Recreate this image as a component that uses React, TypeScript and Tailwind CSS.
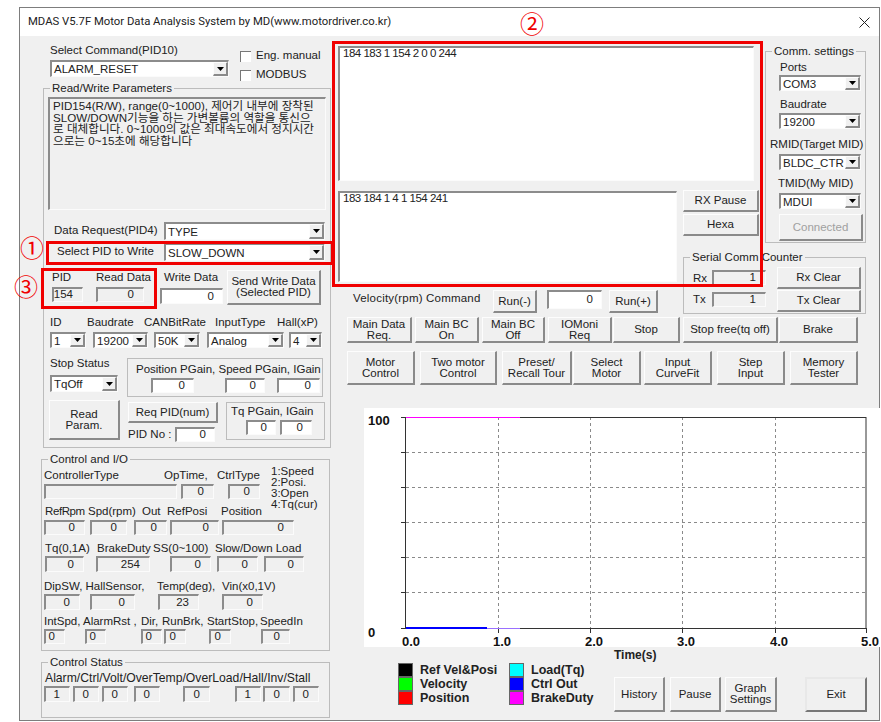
import type { ReactNode } from "react";
import { twMerge } from "tailwind-merge";

const sunken =
  "border-t-2 border-l-2 border-r border-b border-t-[#8c8c8c] border-l-[#8c8c8c] border-r-[#fbfbfb] border-b-[#fbfbfb]";
const raised =
  "border-t border-l border-r-2 border-b-2 border-t-[#fdfdfd] border-l-[#fdfdfd] border-r-[#8a8a8a] border-b-[#8a8a8a] bg-[#f0f0f0]";

type BoxProps = { className?: string; v?: string };

function Field({ className, v }: BoxProps) {
  return (
    <div className={twMerge("flex h-[15px] shrink-0 items-center justify-end pr-[9px] leading-none bg-[#f0f0f0]", sunken, className)}>
      {v}
    </div>
  );
}

function Input({ className, v }: BoxProps) {
  return (
    <div className={twMerge("flex h-[15px] shrink-0 items-center justify-end pr-[8px] leading-none bg-white", sunken, className)}>
      {v}
    </div>
  );
}

function Combo({ className, v }: BoxProps) {
  return (
    <div className={twMerge("flex h-[17px] shrink-0 items-center bg-white", sunken, className)}>
      <span className="min-w-0 flex-1 overflow-hidden whitespace-nowrap pl-[2px] leading-[14px]">{v}</span>
      <span className={twMerge("flex w-[15px] shrink-0 items-center justify-center self-stretch", raised)}>
        <svg width="7" height="4" viewBox="0 0 7 4">
          <path d="M0 0h7L3.5 4z" fill="#000" />
        </svg>
      </span>
    </div>
  );
}

function Btn({ className, children }: { className?: string; children: ReactNode }) {
  return (
    <div className={twMerge("flex shrink-0 items-center justify-center text-center leading-[11px]", raised, className)}>
      <span>{children}</span>
    </div>
  );
}

function Group({ title, className, children }: { title?: string; className?: string; children: ReactNode }) {
  return (
    <div className={twMerge("relative shrink-0 border border-[#bcbcbc]", className)}>
      {title && (
        <span className="absolute left-[6px] top-[-8px] whitespace-nowrap bg-[#f0f0f0] px-[2px] leading-[14px]">{title}</span>
      )}
      {children}
    </div>
  );
}

function Check({ label, className }: { label: string; className?: string }) {
  return (
    <div className={twMerge("flex items-center", className)}>
      <span className="h-[11px] w-[11px] border-t border-l border-[#777] bg-white" />
      <span className="ml-[5px] pb-[2px] leading-none">{label}</span>
    </div>
  );
}

function Row({ className, children }: { className?: string; children: ReactNode }) {
  return <div className={twMerge("flex whitespace-nowrap", className)}>{children}</div>;
}

function LeftPanel() {
  return (
    <div className="flex w-[312px] shrink-0 flex-col">
      <div className="ml-[30px] mt-[7px] flex h-[37px]">
        <div className="w-[179px]">
          <div className="h-[17px] leading-[15px]">Select Command(PID10)</div>
          <Combo className="w-[179px]" v="ALARM_RESET" />
        </div>
        <div className="ml-[11px] pt-[7px]">
          <Check label="Eng. manual" />
          <Check label="MODBUS" className="mt-[5px]" />
        </div>
      </div>

      <Group title="Read/Write Parameters" className="ml-[23px] mt-[8px] h-[360px] w-[288px]">
        <div className={twMerge("ml-[4px] mt-[8px] h-[113px] w-[278px] whitespace-nowrap bg-[#f0f0f0] pl-[3px] pt-[1px] text-[11.6px] leading-[11.5px]", sunken)}>
          PID154(R/W), range(0~1000), 제어기 내부에 장착된
          <br />
          SLOW/DOWN기능을 하는 가변볼륨의 역할을 통신으
          <br />
          로 대체합니다. 0~1000의 값은 최대속도에서 정지시간
          <br />
          으로는 0~15초에 해당합니다
        </div>
        <Row className="mt-[12px] items-center">
          <span className="ml-[10px] w-[110px]">Data Request(PID4)</span>
          <Combo className="h-[18px] w-[161px]" v="TYPE" />
        </Row>
        <Row className="mt-[3px] items-center">
          <span className="ml-[13px] w-[107px]">Select PID to Write</span>
          <Combo className="h-[18px] w-[161px]" v="SLOW_DOWN" />
        </Row>
        <Row className="mt-[9px]">
          <div className="ml-[8px] w-[44px]">
            <div className="h-[17px] leading-[14px]">PID</div>
            <Field className="w-[31px]" v="154" />
          </div>
          <div className="w-[64px]">
            <div className="h-[17px] leading-[14px]">Read Data</div>
            <Field className="w-[48px]" v="0" />
          </div>
          <div className="w-[67px]">
            <div className="h-[18px] pl-[4px] leading-[14px]">Write Data</div>
            <Input className="h-[16px] w-[63px]" v="0" />
          </div>
          <Btn className="h-[35px] w-[94px]">
            Send Write Data
            <br />
            (Selected PID)
          </Btn>
        </Row>
        <Row className="ml-[6px] mt-[11px] h-[13px] items-center">
          <span className="w-[37px]">ID</span>
          <span className="w-[57px]">Baudrate</span>
          <span className="w-[71px]">CANBitRate</span>
          <span className="w-[62px]">InputType</span>
          <span>Hall(xP)</span>
        </Row>
        <Row className="ml-[6px] mt-[3px]">
          <Combo className="h-[16px] w-[36px]" v="1" />
          <Combo className="ml-[7px] h-[16px] w-[55px]" v="19200" />
          <Combo className="ml-[6px] h-[16px] w-[46px]" v="50K" />
          <Combo className="ml-[7px] h-[16px] w-[77px]" v="Analog" />
          <Combo className="ml-[5px] h-[16px] w-[33px]" v="4" />
        </Row>
        <Row className="mt-[9px]">
          <div className="ml-[6px] w-[77px]">
            <div className="h-[18px] leading-[13px]">Stop Status</div>
            <Combo className="w-[68px]" v="TqOff" />
          </div>
          <Group className="mt-[1px] h-[39px] w-[196px]">
            <div className="h-[19px] pl-[8px] pt-[3px] leading-[14px]">Position PGain, Speed PGain, IGain</div>
            <Row>
              <Input className="ml-[23px] w-[43px]" v="0" />
              <Input className="ml-[31px] w-[40px]" v="0" />
              <Input className="ml-[12px] w-[43px]" v="0" />
            </Row>
          </Group>
        </Row>
        <Row className="mt-[3px]">
          <Btn className="ml-[5px] h-[40px] w-[71px]">
            Read
            <br />
            Param.
          </Btn>
          <div className="ml-[8px] w-[98px]">
            <Btn className="mt-[2px] h-[21px] w-[90px]">Req PID(num)</Btn>
            <Row className="mt-[3px] items-center">
              <span className="w-[47px]">PID No :</span>
              <Input className="w-[40px]" v="0" />
            </Row>
          </div>
          <Group className="mt-[2px] h-[38px] w-[99px]">
            <div className="h-[17px] pl-[4px] pt-[1px] leading-[14px]">Tq PGain, IGain</div>
            <Row>
              <Input className="ml-[19px] w-[30px]" v="0" />
              <Input className="ml-[4px] w-[32px]" v="0" />
            </Row>
          </Group>
        </Row>
      </Group>

      <Group title="Control and I/O" className="ml-[21px] mt-[11px] h-[192px] w-[289px]">
        <div className="mt-[9px] flex">
          <div className="w-[229px] pl-[2px]">
            <Row className="h-[15px] leading-[13px]">
              <span className="w-[120px]">ControllerType</span>
              <span className="w-[53px]">OpTime,</span>
              <span>CtrlType</span>
            </Row>
            <Row>
              <Field className="w-[133px]" />
              <Field className="ml-[4px] w-[33px]" v="0" />
              <Field className="ml-[14px] w-[32px]" v="0" />
            </Row>
            <Row className="ml-[1px] mt-[6px] h-[15px] leading-[13px]">
              <span className="w-[43px] tracking-[-0.4px]">RefRpm</span>
              <span className="w-[54px]">Spd(rpm)</span>
              <span className="w-[25px]">Out</span>
              <span className="w-[54px]">RefPosi</span>
              <span>Position</span>
            </Row>
          </div>
          <div className="-mt-[3px] whitespace-nowrap leading-[11px]">
            1:Speed
            <br />
            2:Posi.
            <br />
            3:Open
            <br />
            4:Tq(cur)
          </div>
        </div>
        <Row className="ml-[2px]">
          <Field className="w-[41px]" v="0" />
          <Field className="ml-[5px] w-[37px]" v="0" />
          <Field className="ml-[7px] w-[33px]" v="0" />
          <Field className="ml-[3px] w-[49px]" v="0" />
          <Field className="ml-[3px] w-[72px]" v="0" />
        </Row>
        <Row className="ml-[3px] mt-[7px] h-[14px] leading-[13px]">
          <span className="w-[52px]">Tq(0,1A)</span>
          <span className="w-[56px]">BrakeDuty</span>
          <span className="w-[62px]">SS(0~100)</span>
          <span>Slow/Down Load</span>
        </Row>
        <Row className="ml-[3px]">
          <Field className="h-[16px] w-[39px]" v="0" />
          <Field className="ml-[12px] h-[16px] w-[54px]" v="254" />
          <Field className="ml-[20px] h-[16px] w-[41px]" v="0" />
          <Field className="ml-[6px] h-[16px] w-[41px]" v="0" />
          <Field className="ml-[6px] h-[16px] w-[40px]" v="0" />
        </Row>
        <Row className="ml-[2px] mt-[8px] h-[14px] leading-[13px]">
          <span className="w-[113px]">DipSW, HallSensor,</span>
          <span className="w-[65px]">Temp(deg),</span>
          <span>Vin(x0,1V)</span>
        </Row>
        <Row className="ml-[2px]">
          <Field className="h-[16px] w-[36px]" v="0" />
          <Field className="ml-[10px] h-[16px] w-[45px]" v="0" />
          <Field className="ml-[23px] h-[16px] w-[41px]" v="23" />
          <Field className="ml-[23px] h-[16px] w-[41px]" v="0" />
        </Row>
        <Row className="ml-[2px] mt-[5px] h-[14px] leading-[13px]">
          <span className="w-[39px]">IntSpd,</span>
          <span className="w-[58px]">AlarmRst ,</span>
          <span className="w-[21px]">Dir,</span>
          <span className="w-[45px]">RunBrk,</span>
          <span className="w-[53px]">StartStop,</span>
          <span>SpeedIn</span>
        </Row>
        <Row className="ml-[2px]">
          <Field className="w-[21px]" v="0" />
          <Field className="ml-[20px] w-[21px]" v="0" />
          <Field className="ml-[35px] w-[21px]" v="0" />
          <Field className="ml-[2px] w-[22px]" v="0" />
          <Field className="ml-[23px] w-[22px]" v="0" />
          <Field className="ml-[30px] w-[29px]" v="0" />
        </Row>
      </Group>

      <Group title="Control Status" className="ml-[21px] mt-[11px] h-[56px] w-[289px]">
        <Row className="ml-[3px] mt-[8px] h-[14px] items-center text-[12.2px]">Alarm/Ctrl/Volt/OverTemp/OverLoad/Hall/Inv/Stall</Row>
        <Row className="ml-[2px] mt-[1px]">
          <Field className="h-[16px] w-[26px]" v="1" />
          <Field className="ml-[3px] h-[16px] w-[26px]" v="0" />
          <Field className="ml-[3px] h-[16px] w-[26px]" v="0" />
          <Field className="ml-[6px] h-[16px] w-[26px]" v="0" />
          <Field className="ml-[23px] h-[16px] w-[27px]" v="0" />
          <Field className="ml-[25px] h-[16px] w-[26px]" v="1" />
          <Field className="ml-[2px] h-[16px] w-[27px]" v="0" />
          <Field className="ml-[3px] h-[16px] w-[26px]" v="0" />
        </Row>
      </Group>
    </div>
  );
}

function CommPanel() {
  return (
    <>
      <div className="col-span-3 col-start-1 row-start-1">
        <div className={twMerge("h-[135px] w-[416px] bg-white pl-[3px] leading-[11px] tracking-[-0.5px]", sunken)}>184 183 1 154 2 0 0 244</div>
      </div>
      <div className={twMerge("col-start-1 row-span-2 row-start-2 mt-[1px] h-[91px] w-[339px] bg-white pl-[3px] leading-[11px] tracking-[-0.5px]", sunken)}>
        183 184 1 4 1 154 241
      </div>
      <div className="col-start-3 row-start-2">
        <Btn className="h-[22px] w-[76px]">RX Pause</Btn>
        <Btn className="mt-[2px] h-[22px] w-[76px]">Hexa</Btn>
      </div>

      <Group title="Comm. settings" className="col-start-5 row-span-2 row-start-1 mt-[5px] h-[192px] w-[101px]">
        <div className="ml-[14px] mt-[8px] h-[15px] leading-[14px]">Ports</div>
        <Combo className="ml-[13px] h-[16px] w-[82px]" v="COM3" />
        <div className="ml-[14px] mt-[6px] h-[16px] leading-[14px]">Baudrate</div>
        <Combo className="ml-[13px] h-[16px] w-[82px]" v="19200" />
        <div className="ml-[4px] mt-[8px] h-[17px] whitespace-nowrap leading-[14px]">RMID(Target MID)</div>
        <Combo className="ml-[13px] h-[16px] w-[82px]" v="BLDC_CTR" />
        <div className="ml-[12px] mt-[6px] h-[17px] leading-[14px]">TMID(My MID)</div>
        <Combo className="ml-[13px] h-[16px] w-[82px]" v="MDUI" />
        <Btn className="ml-[13px] mt-[5px] h-[27px] w-[84px] text-[#a0a0a0]">Connected</Btn>
      </Group>

      <Group title="Serial Comm  Counter" className="col-span-3 col-start-3 row-span-2 row-start-3 mt-[14px] h-[57px] w-[183px]">
        <Row className="mt-[12px] items-start">
          <div className="ml-[9px] w-[19px]">
            <div className="h-[22px] pt-[1px] leading-[14px]">Rx</div>
            <div className="leading-[14px]">Tx</div>
          </div>
          <div>
            <Field className="w-[54px]" v="1" />
            <Field className="mt-[7px] w-[54px]" v="1" />
          </div>
          <div className="-mt-[3px] ml-[11px]">
            <Btn className="h-[22px] w-[84px]">Rx Clear</Btn>
            <Btn className="mt-[1px] h-[22px] w-[84px]">Tx Clear</Btn>
          </div>
        </Row>
      </Group>

      <Row className="col-span-3 col-start-1 row-start-4 items-start">
        <span className="ml-[15px] mt-[1px] w-[140px] leading-[14px] tracking-[0.2px]">Velocity(rpm) Command</span>
        <Btn className="h-[23px] w-[44px]">Run(-)</Btn>
        <Input className="ml-[10px] h-[19px] w-[55px]" v="0" />
        <Btn className="ml-[7px] h-[23px] w-[49px]">Run(+)</Btn>
      </Row>
    </>
  );
}

function ChartSvg() {
  const xs = [134, 226, 318, 411];
  const ys = [44, 79, 114, 149, 184];
  const labels: [string, number][] = [
    ["0.0", 38],
    ["1.0", 129],
    ["2.0", 221],
    ["3.0", 313],
    ["4.0", 406],
    ["5.0", 497],
  ];
  return (
    <svg width="516" height="239" viewBox="0 0 516 239" className="block overflow-visible bg-white">
      {xs.map((x) => (
        <line key={x} x1={x + 0.5} x2={x + 0.5} y1="9" y2="220" stroke="#8a8a8a" strokeDasharray="3 3" />
      ))}
      {ys.map((y) => (
        <line key={y} x1="42" x2="502" y1={y + 0.5} y2={y + 0.5} stroke="#8a8a8a" strokeDasharray="3 3" />
      ))}
      <rect x="41.5" y="9.5" width="460.5" height="211" fill="none" stroke="#333" />
      {[9, 44, 79, 114, 149, 184, 220].map((y) => (
        <line key={y} x1="37" x2="42" y1={y + 0.5} y2={y + 0.5} stroke="#333" />
      ))}
      {[...xs, 502].map((x) => (
        <line key={x} x1={x + 0.5} x2={x + 0.5} y1="220" y2="225" stroke="#333" />
      ))}
      <line x1="42" x2="156" y1="9.5" y2="9.5" stroke="#ff00ff" />
      <line x1="42" x2="156" y1="220.5" y2="220.5" stroke="#9a70ff" />
      <line x1="42" x2="123" y1="220" y2="220" stroke="#0000ff" strokeWidth="2" />
      <g fontFamily="Liberation Sans, sans-serif" fontSize="13" fontWeight="700" fill="#111">
        <text x="4" y="17">100</text>
        <text x="4" y="229">0</text>
        {labels.map(([t, x]) => (
          <text key={t} x={x} y="238">{t}</text>
        ))}
      </g>
    </svg>
  );
}

function Legend({ items, className }: { items: [string, string][]; className?: string }) {
  return (
    <div className={twMerge("shrink-0", className)}>
      {items.map(([color, label]) => (
        <div key={label} className="flex h-[14px] items-center">
          <span className="h-[14px] w-[15px] border border-[#666]" style={{ backgroundColor: color }} />
          <span className="ml-[7px] whitespace-nowrap text-[12.5px] font-bold leading-none">{label}</span>
        </div>
      ))}
    </div>
  );
}

function RightPanel() {
  return (
    <div className="flex w-[548px] shrink-0 flex-col">
      <div className="ml-[6px] mt-[10px] grid grid-cols-[339px_6px_76px_6px_101px] grid-rows-[144px_53px_47px_24px]">
        <CommPanel />
      </div>
      <Row className="ml-[15px] mt-[3px]">
        <Btn className="h-[26px] w-[65px]">
          Main Data
          <br />
          Req.
        </Btn>
        <Btn className="ml-[3px] h-[26px] w-[64px]">
          Main BC
          <br />
          On
        </Btn>
        <Btn className="ml-[3px] h-[26px] w-[63px]">
          Main BC
          <br />
          Off
        </Btn>
        <Btn className="ml-[3px] h-[26px] w-[64px]">
          IOMoni
          <br />
          Req
        </Btn>
        <Btn className="ml-[1px] h-[26px] w-[67px]">Stop</Btn>
        <Btn className="ml-[3px] h-[26px] w-[95px]">Stop free(tq off)</Btn>
        <Btn className="ml-[1px] h-[26px] w-[79px]">Brake</Btn>
      </Row>
      <Row className="ml-[15px] mt-[8px]">
        <Btn className="h-[34px] w-[68px]">
          Motor
          <br />
          Control
        </Btn>
        <Btn className="ml-[5px] h-[34px] w-[77px]">
          Two motor
          <br />
          Control
        </Btn>
        <Btn className="ml-[5px] h-[34px] w-[70px]">
          Preset/
          <br />
          Recall Tour
        </Btn>
        <Btn className="ml-[1px] h-[34px] w-[68px]">
          Select
          <br />
          Motor
        </Btn>
        <Btn className="ml-[3px] h-[34px] w-[68px]">
          Input
          <br />
          CurveFit
        </Btn>
        <Btn className="ml-[5px] h-[34px] w-[68px]">
          Step
          <br />
          Input
        </Btn>
        <Btn className="ml-[5px] h-[34px] w-[68px]">
          Memory
          <br />
          Tester
        </Btn>
      </Row>
      <div className="ml-[32px] mt-[23px]">
        <ChartSvg />
      </div>
      <div className="ml-[282px] h-[16px] pt-[2px] text-[12px] font-bold leading-[13px]">Time(s)</div>
      <Row className="ml-[66px]">
        <Legend
          className="w-[111px]"
          items={[
            ["#000000", "Ref Vel&Posi"],
            ["#00ff00", "Velocity"],
            ["#ff0000", "Position"],
          ]}
        />
        <Legend
          className="w-[105px]"
          items={[
            ["#00ffff", "Load(Tq)"],
            ["#0000ff", "Ctrl Out"],
            ["#ff00ff", "BrakeDuty"],
          ]}
        />
        <Btn className="mt-[14px] h-[35px] w-[51px]">History</Btn>
        <Btn className="ml-[5px] mt-[14px] h-[35px] w-[51px]">Pause</Btn>
        <Btn className="ml-[4px] mt-[14px] h-[35px] w-[52px]">
          Graph
          <br />
          Settings
        </Btn>
        <div className="ml-[28px] mt-[14px] flex h-[35px] w-[62px] items-center justify-center border-2 border-t-[#e8e8e8] border-l-[#e8e8e8] border-r-[#777] border-b-[#777] bg-[#f0f0f0]">
          Exit
        </div>
      </Row>
    </div>
  );
}

export default function App() {
  return (
    <div className="relative h-[722px] w-[881px] overflow-hidden bg-white pl-[19px] pt-[7px] font-['Liberation_Sans','Noto_Sans_CJK_KR',sans-serif] text-[11.5px] text-[#222]">
      <div className="flex h-[714px] w-[861px] flex-col border border-[#7d7d7d] bg-[#f0f0f0]">
        <div className="flex h-[28px] shrink-0 items-center justify-between bg-white pl-[8px] pr-[9px] font-['Roboto',sans-serif] text-[11.3px]">
          <span>MDAS V5.7F Motor Data Analysis System by MD(www.motordriver.co.kr)</span>
          <svg width="11" height="11" viewBox="0 0 11 11">
            <path d="M0.5 0.5l10 10M10.5 0.5l-10 10" stroke="#222" fill="none" />
          </svg>
        </div>
        <div className="flex min-h-0 flex-1">
          <LeftPanel />
          <RightPanel />
        </div>
      </div>

      <div className="absolute left-[332px] top-[41px] h-[246px] w-[431px] border-[3px] border-[#f00000]" />
      <div className="absolute left-[46px] top-[241px] h-[24px] w-[288px] border-[3px] border-[#f00000]" />
      <div className="absolute left-[41px] top-[268px] h-[41px] w-[116px] border-[3px] border-[#f00000]" />
      <span className="absolute left-[20px] top-[233px] font-['Noto_Sans_CJK_KR',sans-serif] text-[24px] leading-[28px] text-[#f00000]">①</span>
      <span className="absolute left-[520px] top-[9px] font-['Noto_Sans_CJK_KR',sans-serif] text-[24px] leading-[28px] text-[#f00000]">②</span>
      <span className="absolute left-[14px] top-[272px] font-['Noto_Sans_CJK_KR',sans-serif] text-[24px] leading-[28px] text-[#f00000]">③</span>
    </div>
  );
}
